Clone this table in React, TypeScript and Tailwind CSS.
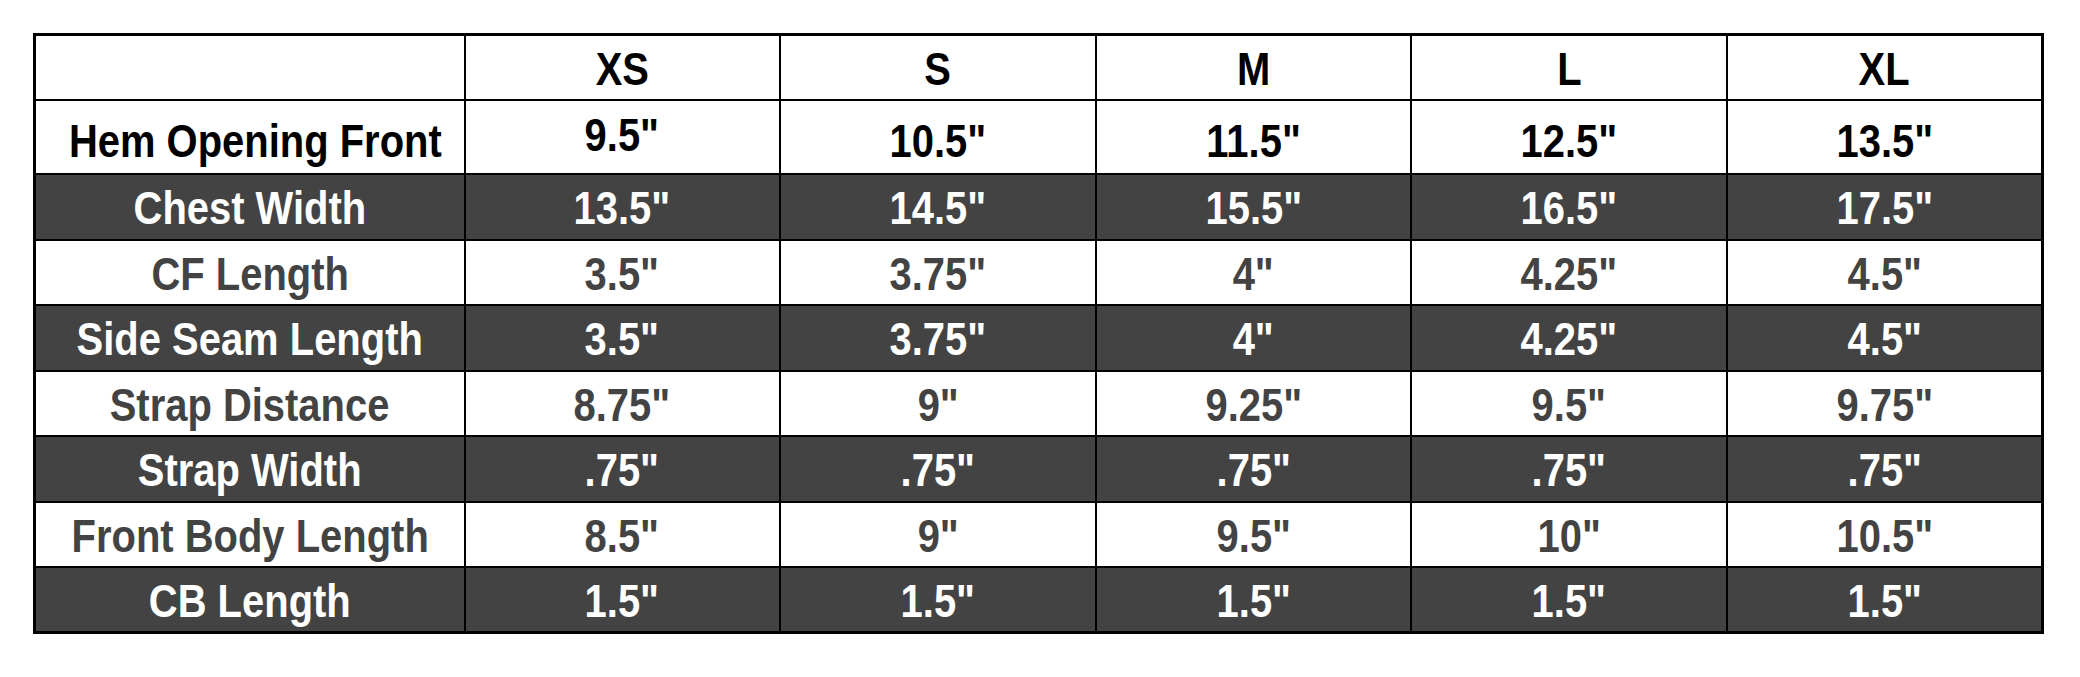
const sizes = ["XS", "S", "M", "L", "XL"];

const rows = [
  { label: "Hem Opening Front", values: ['9.5"', '10.5"', '11.5"', '12.5"', '13.5"'] },
  { label: "Chest Width", values: ['13.5"', '14.5"', '15.5"', '16.5"', '17.5"'] },
  { label: "CF Length", values: ['3.5"', '3.75"', '4"', '4.25"', '4.5"'] },
  { label: "Side Seam Length", values: ['3.5"', '3.75"', '4"', '4.25"', '4.5"'] },
  { label: "Strap Distance", values: ['8.75"', '9"', '9.25"', '9.5"', '9.75"'] },
  { label: "Strap Width", values: ['.75"', '.75"', '.75"', '.75"', '.75"'] },
  { label: "Front Body Length", values: ['8.5"', '9"', '9.5"', '10"', '10.5"'] },
  { label: "CB Length", values: ['1.5"', '1.5"', '1.5"', '1.5"', '1.5"'] },
];

const Txt = ({ children }: { children: React.ReactNode }) => (
  <span className="inline-block scale-x-[0.85] whitespace-nowrap">{children}</span>
);

export default function App() {
  return (
    <div className="w-[2080px] h-[677px] bg-white pt-[33px] pl-[33px] font-['Liberation_Sans',Arial,sans-serif] font-bold text-[47px] leading-[47px]">
      <table className="table-fixed border-collapse border-[3px] border-black w-[2008px]">
        <colgroup>
          <col className="w-[430px]" />
          {sizes.map((s) => (
            <col key={s} className="w-[315.6px]" />
          ))}
        </colgroup>
        <thead>
          <tr className="h-[65.5px] text-black">
            <th className="border-2 border-black bg-white" />
            {sizes.map((s) => (
              <th key={s} className="border-2 border-black bg-white text-center align-middle pt-[2px]">
                <Txt>{s}</Txt>
              </th>
            ))}
          </tr>
        </thead>
        <tbody>
          {rows.map((row, i) => {
            const first = i === 0;
            const dark = i % 2 === 1;
            const rowCls = first
              ? "h-[74px] bg-white text-black"
              : dark
              ? "h-[65.5px] bg-[#434343] text-white"
              : "h-[65.5px] bg-white text-[#434343]";
            return (
              <tr key={row.label} className={rowCls}>
                <td className={`border-2 border-black text-center align-middle ${first ? "pt-[7px]" : "pt-[2px]"}`}>
                  <Txt>{row.label}</Txt>
                </td>
                {row.values.map((v, j) => (
                  <td
                    key={j}
                    className={`border-2 border-black text-center align-middle ${
                      first ? (j === 0 ? "pb-[5px]" : "pt-[7px]") : "pt-[2px]"
                    }`}
                  >
                    <Txt>{v}</Txt>
                  </td>
                ))}
              </tr>
            );
          })}
        </tbody>
      </table>
    </div>
  );
}
